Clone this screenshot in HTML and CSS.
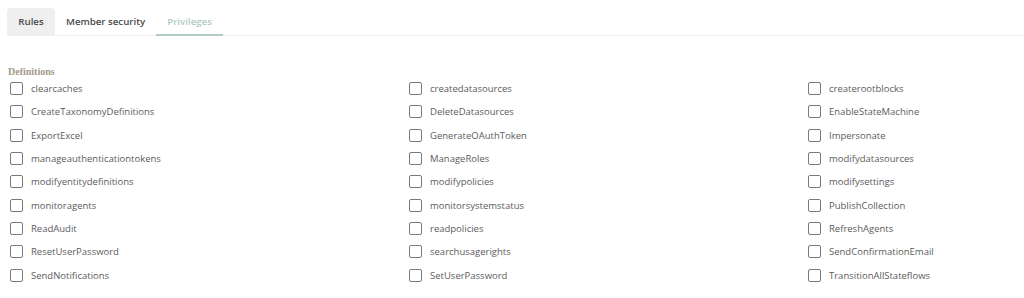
FILE: index.html
```html
<!DOCTYPE html>
<html lang="en">

<head>
    <meta charset="UTF-8">
    <title>Privileges</title>
    <link rel="stylesheet" href="styles.css">
</head>

<body>
    <div class="tabs">
        <div class="tab active">Rules</div>
        <div class="tab">Member security</div>
        <div class="tab selected">Privileges</div>
    </div>
    <div class="section">
        <div class="sectionTitle">Definitions</div>
        <div class="grid">
            <label class="item"><span class="box"></span>clearcaches</label>
            <label class="item"><span class="box"></span>createdatasources</label>
            <label class="item"><span class="box"></span>createrootblocks</label>
            <label class="item"><span class="box"></span>CreateTaxonomyDefinitions</label>
            <label class="item"><span class="box"></span>DeleteDatasources</label>
            <label class="item"><span class="box"></span>EnableStateMachine</label>
            <label class="item"><span class="box"></span>ExportExcel</label>
            <label class="item"><span class="box"></span>GenerateOAuthToken</label>
            <label class="item"><span class="box"></span>Impersonate</label>
            <label class="item"><span class="box"></span>manageauthenticationtokens</label>
            <label class="item"><span class="box"></span>ManageRoles</label>
            <label class="item"><span class="box"></span>modifydatasources</label>
            <label class="item"><span class="box"></span>modifyentitydefinitions</label>
            <label class="item"><span class="box"></span>modifypolicies</label>
            <label class="item"><span class="box"></span>modifysettings</label>
            <label class="item"><span class="box"></span>monitoragents</label>
            <label class="item"><span class="box"></span>monitorsystemstatus</label>
            <label class="item"><span class="box"></span>PublishCollection</label>
            <label class="item"><span class="box"></span>ReadAudit</label>
            <label class="item"><span class="box"></span>readpolicies</label>
            <label class="item"><span class="box"></span>RefreshAgents</label>
            <label class="item"><span class="box"></span>ResetUserPassword</label>
            <label class="item"><span class="box"></span>searchusagerights</label>
            <label class="item"><span class="box"></span>SendConfirmationEmail</label>
            <label class="item"><span class="box"></span>SendNotifications</label>
            <label class="item"><span class="box"></span>SetUserPassword</label>
            <label class="item"><span class="box"></span>TransitionAllStateflows</label>
        </div>
    </div>
</body>

</html>
```
FILE: styles.css
```css
body {
    margin: 8px 0 0 7px;
    font-family: "Open Sans", "Noto Sans", sans-serif;
    background: #fff;
}

.tabs {
    display: flex;
    height: 27px;
    border-bottom: 1px solid #eeeeee;
}

.tab {
    display: flex;
    align-items: center;
    padding: 0 11px;
    font-size: 9.7px;
    font-weight: 600;
    color: #4a4a4a;
    border-radius: 4px 4px 0 0;
}

.tab.active {
    background: #efefef;
    width: 26px;
    justify-content: center;
}

.tab.selected {
    color: #b3cbc3;
    border-bottom: 2px solid #b3cbc3;
    margin-bottom: -1px;
}

.section {
    padding-top: 30px;
}

.sectionTitle {
    font-family: "Liberation Serif", serif;
    font-weight: bold;
    font-size: 10px;
    color: #a39a88;
    margin-left: 1px;
    height: 11px;
}

.grid {
    display: grid;
    grid-template-columns: 399px 399px 1fr;
    grid-auto-rows: 23.3px;
}

.item {
    display: flex;
    align-items: center;
    font-size: 9.5px;
    color: #5c5c5c;
}

.box {
    width: 11px;
    height: 11px;
    border: 1px solid #7a7a7a;
    border-radius: 2px;
    margin: 0 8px 0 3px;
}
```
